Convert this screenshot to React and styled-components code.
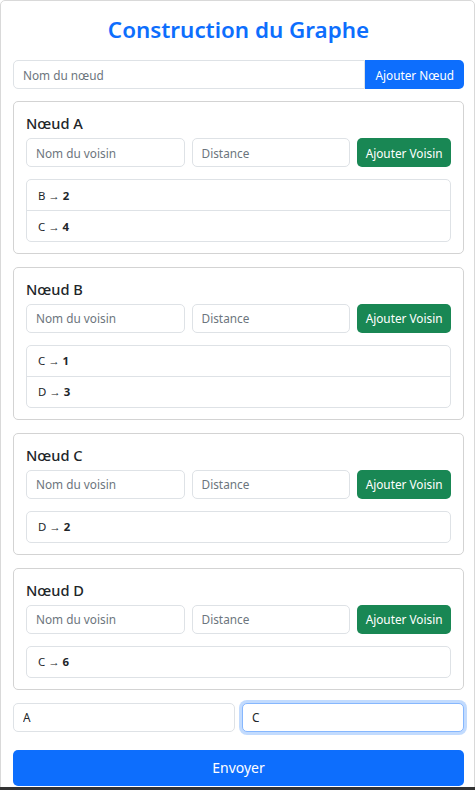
import React from 'react'
import styled, { createGlobalStyle } from 'styled-components';

const GlobalStyle = createGlobalStyle`
    * { box-sizing: border-box; }
    body {
        margin: 0;
        font-family: "Segoe UI", "Noto Sans", "Liberation Sans", sans-serif;
        color: #212529;
        background: #fff;
    }
`

const Container = styled.div`
    width: 475px;
    border: 1px solid #d9d9d9;
    border-radius: 5px 5px 0 0;
    padding: 12px 10px 20px 12px;
`
const Title = styled.h1`
    margin: 2px 0 16px;
    text-align: center;
    color: #0d6efd;
    font-size: 22.4px;
    font-weight: 600;
    line-height: 29px;
`
const InputGroup = styled.div`
    display: flex;
    margin-bottom: 12px;
`
const Input = styled.input`
    flex: 1;
    min-width: 0;
    height: 29px;
    padding: 0 9px;
    font-family: inherit;
    font-size: 11.8px;
    color: #212529;
    border: 1px solid ${({ focused }) => (focused ? '#86b7fe' : '#dee2e6')};
    border-radius: ${({ joined }) => (joined ? '5px 0 0 5px' : '5px')};
    box-shadow: ${({ focused }) => (focused ? '0 0 0 3px rgba(13,110,253,.25)' : 'none')};
    outline: none;
    background: #fff;

    &::placeholder {
        color: #6c757d;
    }
`
const Button = styled.button`
    height: ${({ big }) => (big ? '36px' : '29px')};
    padding: 0 ${({ variant }) => (variant === 'green' ? '8.5px' : '10px')};
    border: none;
    border-radius: ${({ joined }) => (joined ? '0 5px 5px 0' : '5px')};
    background: ${({ variant }) => (variant === 'green' ? '#198754' : '#0d6efd')};
    color: #fff;
    font-family: inherit;
    font-size: ${({ big }) => (big ? '14px' : '11.8px')};
    white-space: nowrap;
    cursor: pointer;
    width: ${({ big }) => (big ? '100%' : 'auto')};
`
const Card = styled.div`
    border: 1px solid #d3d3d3;
    border-radius: 5px;
    padding: 12px 12px 11.4px;
    margin-bottom: 12.6px;
`
const CardTitle = styled.h5`
    margin: 0 0 5px;
    font-size: 14.6px;
    font-weight: 500;
    line-height: 19px;
`
const Row = styled.div`
    display: flex;
    gap: 7px;
    margin-bottom: ${({ spacing }) => spacing || 12}px;
`
const List = styled.ul`
    list-style: none;
    margin: 0;
    padding: 0;
    border: 1px solid #dee2e6;
    border-radius: 5px;
`
const Item = styled.li`
    height: 31px;
    padding: 0 11px;
    display: flex;
    align-items: center;
    font-size: 11.4px;
    border-top: 1px solid #dee2e6;

    &:first-child {
        border-top: none;
        height: 30px;
    }
    & strong { margin-left: 3px; font-weight: 700; }
`
const BottomBar = styled.div`
    position: fixed;
    left: 0;
    right: 0;
    bottom: 0;
    height: 3px;
    background: #333;
`

const graph = [
    { name: 'A', voisins: [['B', 2], ['C', 4]] },
    { name: 'B', voisins: [['C', 1], ['D', 3]] },
    { name: 'C', voisins: [['D', 2]] },
    { name: 'D', voisins: [['C', 6]] },
];

export default function App() {
    return (
        <>
            <GlobalStyle />
            <Container>
                <Title>Construction du Graphe</Title>
                <InputGroup>
                    <Input joined placeholder="Nom du nœud" />
                    <Button joined>Ajouter Nœud</Button>
                </InputGroup>

                {graph.map((n) => (
                    <Card key={n.name}>
                        <CardTitle>Nœud {n.name}</CardTitle>
                        <Row>
                            <Input placeholder="Nom du voisin" />
                            <Input placeholder="Distance" />
                            <Button variant="green">Ajouter Voisin</Button>
                        </Row>
                        <List>
                            {n.voisins.map(([v, d]) => (
                                <Item key={v}>{v} → <strong>{d}</strong></Item>
                            ))}
                        </List>
                    </Card>
                ))}

                <Row spacing={18}>
                    <Input defaultValue="A" />
                    <Input focused defaultValue="C" />
                </Row>
                <Button big>Envoyer</Button>
            </Container>
            <BottomBar />
        </>
    );
}
